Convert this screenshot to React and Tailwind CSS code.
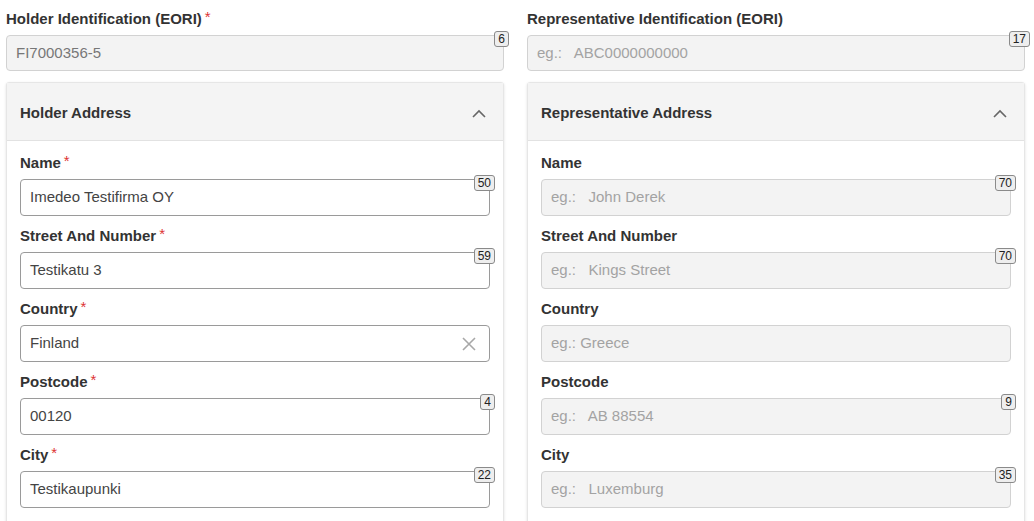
import React from "react";

const font = { fontFamily: '"Liberation Sans", Arial, sans-serif' };

function Badge({ n }) {
  return (
    <span className="absolute -right-[6px] -top-[5px] h-[16px] min-w-[12px] px-[3px] rounded-[3px] border border-[#8a8a8a] bg-[#eeeeee] text-[12px] leading-[14px] text-[#222] text-center">
      {n}
    </span>
  );
}

function Label({ text, req }) {
  return (
    <div className="h-[20px] leading-[20px] text-[15px] font-bold text-[#333] mb-[6px] flex items-start">
      <span>{text}</span>
      {req && <span className="ml-[3px] text-[#d33] text-[15px] font-normal leading-[16px]">*</span>}
    </div>
  );
}

function Input({ value, placeholder, disabled, badge, clear, h = "h-[37px]" }) {
  return (
    <div
      className={`relative ${h} rounded-[4px] border flex items-center px-[9px] text-[15px] ${
        disabled ? "bg-[#f3f3f3] border-[#d2d2d2]" : "bg-white border-[#9a9a9a]"
      }`}
    >
      {value ? (
        <span className={disabled ? "text-[#777]" : "text-[#444]"}>{value}</span>
      ) : (
        <span className="text-[#a3a3a3] whitespace-pre">{placeholder}</span>
      )}
      {clear && (
        <svg className="absolute right-[12px] top-1/2 -translate-y-1/2" width="16" height="16" viewBox="0 0 16 16">
          <path d="M2 2 L14 14 M14 2 L2 14" stroke="#a8a8a8" strokeWidth="1.6" fill="none" />
        </svg>
      )}
      {badge != null && <Badge n={badge} />}
    </div>
  );
}

function Field({ label, req, ...rest }) {
  return (
    <div className="mb-[10px]">
      <Label text={label} req={req} />
      <Input {...rest} />
    </div>
  );
}

function Card({ title, children }) {
  return (
    <div className="mt-[11px] rounded-[3px] border border-[#e6e6e6] shadow-[0_1px_3px_rgba(0,0,0,0.12)] bg-white">
      <div className="h-[58px] bg-[#f4f4f4] border-b border-[#e2e2e2] flex items-center justify-between pl-[13px] pr-[16px] pt-[4px]">
        <span className="text-[15px] font-bold text-[#333]">{title}</span>
        <svg width="16" height="10" viewBox="0 0 16 10">
          <path d="M2 8 L8 2 L14 8" stroke="#666" strokeWidth="1.6" fill="none" />
        </svg>
      </div>
      <div className="px-[13px] pt-[12px] pb-[10px]">{children}</div>
    </div>
  );
}

export default function App() {
  return (
    <div style={font} className="w-[1034px] h-[521px] overflow-hidden bg-white pt-[9px] pl-[6px]">
      <div className="flex gap-[23px]">
        <div className="w-[498px]">
          <Label text="Holder Identification (EORI)" req />
          <Input value="FI7000356-5" disabled badge={6} h="h-[36px]" />
          <Card title="Holder Address">
            <Field label="Name" req value="Imedeo Testifirma OY" badge={50} />
            <Field label="Street And Number" req value="Testikatu 3" badge={59} />
            <Field label="Country" req value="Finland" clear />
            <Field label="Postcode" req value="00120" badge={4} />
            <Field label="City" req value="Testikaupunki" badge={22} />
          </Card>
        </div>
        <div className="w-[498px]">
          <Label text="Representative Identification (EORI)" />
          <Input placeholder="eg.:   ABC0000000000" disabled badge={17} h="h-[36px]" />
          <Card title="Representative Address">
            <Field label="Name" placeholder="eg.:   John Derek" disabled badge={70} />
            <Field label="Street And Number" placeholder="eg.:   Kings Street" disabled badge={70} />
            <Field label="Country" placeholder="eg.: Greece" disabled />
            <Field label="Postcode" placeholder="eg.:   AB 88554" disabled badge={9} />
            <Field label="City" placeholder="eg.:   Luxemburg" disabled badge={35} />
          </Card>
        </div>
      </div>
    </div>
  );
}
